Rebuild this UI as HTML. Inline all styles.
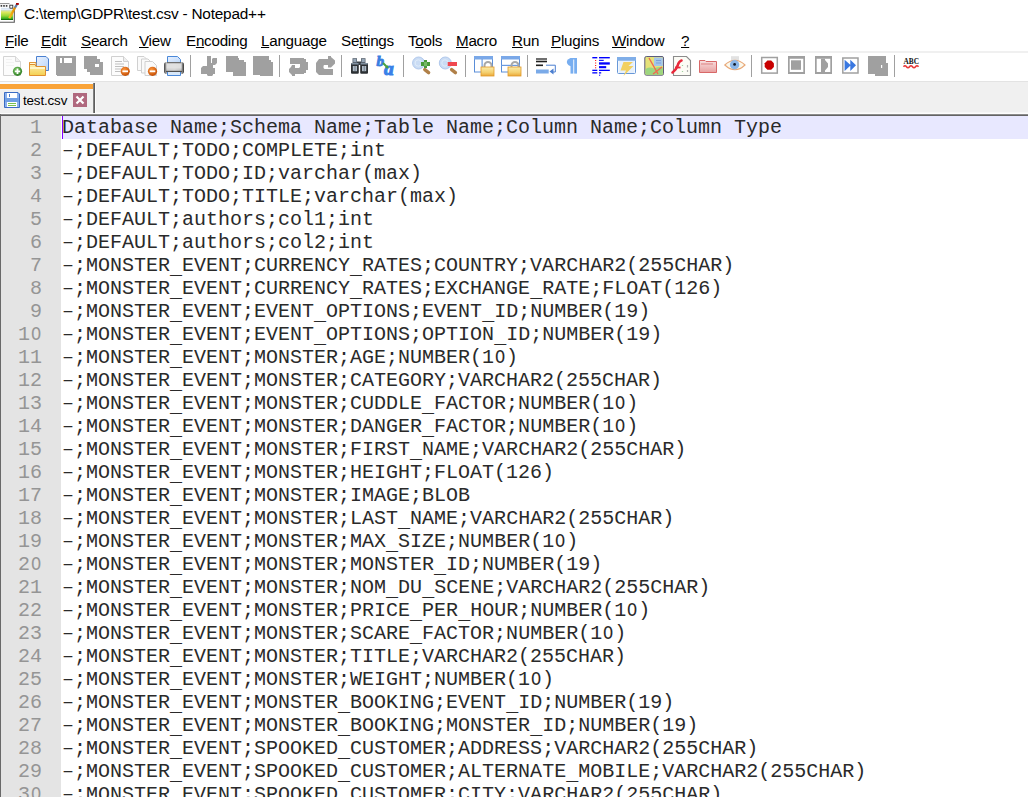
<!DOCTYPE html>
<html><head><meta charset="utf-8">
<style>
*{margin:0;padding:0;box-sizing:border-box}
html,body{width:1028px;height:797px;overflow:hidden;background:#fff}
body{position:relative;font-family:"Liberation Sans",sans-serif}
.abs{position:absolute}
#title{position:absolute;left:24px;top:4.2px;font-size:15.4px;letter-spacing:-0.22px;line-height:20px;color:#000;white-space:pre}
.m{position:absolute;top:31.5px;font-size:15.2px;letter-spacing:-0.25px;line-height:18px;color:#000;white-space:pre}
.m u{text-decoration:underline;text-decoration-thickness:1px;text-underline-offset:0.5px}
#l1{position:absolute;left:0;top:51px;width:1028px;height:2px;background:#f0f0f0}
#tb{position:absolute;left:0;top:53px;width:1028px;height:28px}
#l2{position:absolute;left:0;top:81px;width:1028px;height:1px;background:#e3e3e3}
#tabbar{position:absolute;left:0;top:82px;width:1028px;height:32px;background:#f0f0f0}
#edtop0{position:absolute;left:96px;top:112px;width:932px;height:1px;background:#f7f7f7}
#edtop1{position:absolute;left:0;top:113px;width:1028px;height:1px;background:#fdfdfd}
#edtop2{position:absolute;left:0;top:114px;width:1028px;height:1px;background:#8c8c8c}
#edtop3{position:absolute;left:0;top:115px;width:1028px;height:1px;background:#646464}
#edleft{position:absolute;left:0;top:114px;width:1px;height:683px;background:#696969}
#gutter{position:absolute;left:1px;top:116px;width:60px;height:681px;background:#e4e4e4}
#hl{position:absolute;left:62px;top:116px;width:966px;height:23px;background:#e8e8ff}
#caret{position:absolute;left:62px;top:116px;width:1px;height:23px;background:#8000ff}
#nums{position:absolute;left:0;top:116px;width:42px;text-align:right;font-family:"Liberation Mono",monospace;font-size:20px;line-height:23px;color:#959595;white-space:pre}
#text{position:absolute;left:62px;top:116px;font-family:"Liberation Mono",monospace;font-size:20px;line-height:23px;color:#2a2a2a;white-space:pre}
#text i{font-style:normal;position:relative;top:3px}
#text b,#nums b{font-weight:normal;display:inline-block;width:12px;transform:scaleX(0.85)}
.sep{position:absolute;top:55px;width:1px;height:22px;background:#a0a0a0}
</style></head><body>
<!-- title -->
<div id="title">C:\temp\GDPR\test.csv - Notepad++</div>
<!-- menu -->
<div class="m" style="left:5px"><u>F</u>ile</div>
<div class="m" style="left:41px"><u>E</u>dit</div>
<div class="m" style="left:81px"><u>S</u>earch</div>
<div class="m" style="left:139px"><u>V</u>iew</div>
<div class="m" style="left:186px">E<u>n</u>coding</div>
<div class="m" style="left:261px"><u>L</u>anguage</div>
<div class="m" style="left:341px">Se<u>t</u>tings</div>
<div class="m" style="left:408px">T<u>o</u>ols</div>
<div class="m" style="left:456px"><u>M</u>acro</div>
<div class="m" style="left:512px"><u>R</u>un</div>
<div class="m" style="left:551px"><u>P</u>lugins</div>
<div class="m" style="left:612px"><u>W</u>indow</div>
<div class="m" style="left:681px"><u>?</u></div>
<div id="l1"></div>
<div id="l2"></div>
<div id="tabbar"></div>
<div id="edtop0"></div>
<div id="edtop1"></div>
<div id="edtop2"></div>
<div id="edtop3"></div>
<div id="edleft"></div>
<div id="gutter"></div>
<div id="hl"></div>
<div id="nums">1
2
3
4
5
6
7
8
9
1<b>O</b>
11
12
13
14
15
16
17
18
19
2<b>O</b>
21
22
23
24
25
26
27
28
29
3<b>O</b></div>
<div id="text">Database Name;Schema Name;Table Name;Column Name;Column Type
–;DEFAULT;TODO;COMPLETE;int
–;DEFAULT;TODO;ID;varchar(max)
–;DEFAULT;TODO;TITLE;varchar(max)
–;DEFAULT;authors;col1;int
–;DEFAULT;authors;col2;int
–;MONSTER<i>_</i>EVENT;CURRENCY<i>_</i>RATES;COUNTRY;VARCHAR2(255CHAR)
–;MONSTER<i>_</i>EVENT;CURRENCY<i>_</i>RATES;EXCHANGE<i>_</i>RATE;FLOAT(126)
–;MONSTER<i>_</i>EVENT;EVENT<i>_</i>OPTIONS;EVENT<i>_</i>ID;NUMBER(19)
–;MONSTER<i>_</i>EVENT;EVENT<i>_</i>OPTIONS;OPTION<i>_</i>ID;NUMBER(19)
–;MONSTER<i>_</i>EVENT;MONSTER;AGE;NUMBER(1<b>O</b>)
–;MONSTER<i>_</i>EVENT;MONSTER;CATEGORY;VARCHAR2(255CHAR)
–;MONSTER<i>_</i>EVENT;MONSTER;CUDDLE<i>_</i>FACTOR;NUMBER(1<b>O</b>)
–;MONSTER<i>_</i>EVENT;MONSTER;DANGER<i>_</i>FACTOR;NUMBER(1<b>O</b>)
–;MONSTER<i>_</i>EVENT;MONSTER;FIRST<i>_</i>NAME;VARCHAR2(255CHAR)
–;MONSTER<i>_</i>EVENT;MONSTER;HEIGHT;FLOAT(126)
–;MONSTER<i>_</i>EVENT;MONSTER;IMAGE;BLOB
–;MONSTER<i>_</i>EVENT;MONSTER;LAST<i>_</i>NAME;VARCHAR2(255CHAR)
–;MONSTER<i>_</i>EVENT;MONSTER;MAX<i>_</i>SIZE;NUMBER(1<b>O</b>)
–;MONSTER<i>_</i>EVENT;MONSTER;MONSTER<i>_</i>ID;NUMBER(19)
–;MONSTER<i>_</i>EVENT;MONSTER;NOM<i>_</i>DU<i>_</i>SCENE;VARCHAR2(255CHAR)
–;MONSTER<i>_</i>EVENT;MONSTER;PRICE<i>_</i>PER<i>_</i>HOUR;NUMBER(1<b>O</b>)
–;MONSTER<i>_</i>EVENT;MONSTER;SCARE<i>_</i>FACTOR;NUMBER(1<b>O</b>)
–;MONSTER<i>_</i>EVENT;MONSTER;TITLE;VARCHAR2(255CHAR)
–;MONSTER<i>_</i>EVENT;MONSTER;WEIGHT;NUMBER(1<b>O</b>)
–;MONSTER<i>_</i>EVENT;MONSTER<i>_</i>BOOKING;EVENT<i>_</i>ID;NUMBER(19)
–;MONSTER<i>_</i>EVENT;MONSTER<i>_</i>BOOKING;MONSTER<i>_</i>ID;NUMBER(19)
–;MONSTER<i>_</i>EVENT;SPOOKED<i>_</i>CUSTOMER;ADDRESS;VARCHAR2(255CHAR)
–;MONSTER<i>_</i>EVENT;SPOOKED<i>_</i>CUSTOMER;ALTERNATE<i>_</i>MOBILE;VARCHAR2(255CHAR)
–;MONSTER<i>_</i>EVENT;SPOOKED<i>_</i>CUSTOMER;CITY;VARCHAR2(255CHAR)</div>
<div id="caret"></div>
<svg class="abs" style="left:0;top:0" width="1028" height="116" viewBox="0 0 1028 116">
<defs>
<linearGradient id="gNpp" x1="0" y1="0" x2="0" y2="1"><stop offset="0" stop-color="#c8daf0"/><stop offset="0.25" stop-color="#e0e860"/><stop offset="0.6" stop-color="#98d838"/><stop offset="0.85" stop-color="#40b020"/><stop offset="1" stop-color="#005800"/></linearGradient>
<linearGradient id="gPen" x1="0" y1="0" x2="1" y2="0"><stop offset="0" stop-color="#f8c020"/><stop offset="1" stop-color="#e08800"/></linearGradient>
<radialGradient id="gGreen" cx="0.4" cy="0.35" r="0.7"><stop offset="0" stop-color="#80c868"/><stop offset="1" stop-color="#2a7a20"/></radialGradient>
<radialGradient id="gOr" cx="0.4" cy="0.35" r="0.7"><stop offset="0" stop-color="#ff9a40"/><stop offset="1" stop-color="#c04800"/></radialGradient>
<linearGradient id="gFold" x1="0" y1="0" x2="0" y2="1"><stop offset="0" stop-color="#fff4c0"/><stop offset="1" stop-color="#f4d050"/></linearGradient>
<linearGradient id="gPg" x1="0" y1="0" x2="1" y2="1"><stop offset="0" stop-color="#eaf2ff"/><stop offset="1" stop-color="#b8d4f8"/></linearGradient>
<linearGradient id="gPrn" x1="0" y1="0" x2="0" y2="1"><stop offset="0" stop-color="#e8e8e8"/><stop offset="0.5" stop-color="#c0c0c0"/><stop offset="1" stop-color="#505050"/></linearGradient>
<linearGradient id="gLock" x1="0" y1="0" x2="0" y2="1"><stop offset="0" stop-color="#fcecaa"/><stop offset="0.6" stop-color="#f4d070"/><stop offset="1" stop-color="#eaa838"/></linearGradient>
<linearGradient id="gRedF" x1="0" y1="0" x2="0" y2="1"><stop offset="0" stop-color="#f8e0e0"/><stop offset="1" stop-color="#e8a0a0"/></linearGradient>
<linearGradient id="gPrnH" x1="0" y1="0" x2="1" y2="0"><stop offset="0" stop-color="#404040"/><stop offset="0.15" stop-color="#d0d0d0"/><stop offset="0.5" stop-color="#d8d8d8"/><stop offset="0.85" stop-color="#c8c8c8"/><stop offset="1" stop-color="#303030"/></linearGradient>
</defs>
<!-- notepad++ app icon -->
<g>
 <rect x="0" y="3.5" width="14" height="19" fill="#fff"/>
 <path d="M0 22.3 H14.3 V8" fill="none" stroke="#5a5a5a" stroke-width="1.1"/>
 <path d="M0 3.6 H9.5" stroke="#808080" stroke-width="0.9"/>
 <path d="M0.6 5.8 h1.6 M3.2 5.8 h1.6 M5.8 5.8 h1.6" stroke="#404040" stroke-width="1.8"/>
 <rect x="9.8" y="5.2" width="3" height="3" fill="#fff" stroke="#303030" stroke-width="0.9"/>
 <rect x="1" y="7.8" width="8.5" height="1" fill="#d0e0f0"/>
 <rect x="1" y="9.5" width="12" height="10.5" fill="url(#gNpp)"/>
 <path d="M9.3 18.2 L15.2 7.2" stroke="url(#gPen)" stroke-width="2.4" stroke-linecap="butt"/>
 <path d="M15 7.6 L16.8 4.6" stroke="#6080a8" stroke-width="2.2"/>
 <rect x="16" y="3" width="2.8" height="1.9" fill="#a00000"/>
</g>
<!-- NEW -->
<g>
 <path d="M3.5 56.5 H15.5 L20.5 61.5 V75.5 H3.5 Z" fill="#fcfcfc" stroke="#d4d4d4" stroke-width="1"/>
 <path d="M15.5 56.5 V61.5 H20.5" fill="#f0f0f0" stroke="#d8d8d8" stroke-width="1"/>
 <path d="M6 59.5h6M6 62.5h8M6 65.5h8" stroke="#f2f2f2" stroke-width="1"/>
 <circle cx="17.5" cy="71.3" r="4.6" fill="url(#gGreen)"/>
 <path d="M17.5 68.6v5.4M14.8 71.3h5.4" stroke="#fff" stroke-width="1.8"/>
</g>
<!-- OPEN -->
<g>
 <path d="M36.5 56.5 H46 L48.5 59 V70.5 H36.5 Z" fill="url(#gPg)" stroke="#4a80d0" stroke-width="1"/>
 <path d="M29.5 62.5 H36 V66.5 H29.5 Z" fill="#fff8d8" stroke="#e09838" stroke-width="1"/>
 <path d="M29.5 62.5 V75.5 H45.5 V66.5 H36 L35 64.5 H29.5" fill="url(#gFold)" stroke="#e09030" stroke-width="1"/>
 <rect x="30" y="67" width="15" height="2" fill="#fff6c8"/>
</g>
<!-- SAVE (disabled) -->
<g fill="#a0a0a0">
 <path d="M56 56 H76 V76 H57 V75 H56 Z"/>
 <rect x="60" y="58" width="2" height="5" fill="#fff"/>
 <rect x="64" y="58" width="8" height="5" fill="#fff"/>
</g>
<!-- SAVE ALL -->
<g fill="#a0a0a0">
 <path d="M84 56 H97 V59 H100 V62 H103 V75 H90 V72 H87 V69 H84 Z"/>
 <rect x="95" y="64" width="4" height="3" fill="#fff"/>
</g>
<!-- CLOSE -->
<g>
 <path d="M111.5 56.5 H123.5 L128.5 61.5 V75.5 H111.5 Z" fill="#fcfcfc" stroke="#d0d0d0" stroke-width="1"/>
 <path d="M123.5 56.5 V61.5 H128.5" fill="#eee" stroke="#d0d0d0" stroke-width="1"/>
 <path d="M115 61.5h7M115 64h9M115 66.5h9M115 69h6M115 71.5h5" stroke="#c0c0c0" stroke-width="1"/>
 <circle cx="125.2" cy="71.3" r="4.6" fill="url(#gOr)"/>
 <rect x="122.4" y="70.4" width="5.6" height="1.8" fill="#fff"/>
</g>
<!-- CLOSE ALL -->
<g fill="#fafafa" stroke="#d0d0d0" stroke-width="1">
 <path d="M137.5 56.5 H144 L146.5 59 V70.5 H137.5 Z"/>
 <path d="M141.5 59 H148 L150.5 61.5 V73 H141.5 Z"/>
 <path d="M145 61.5 H152.5 L156.5 65.5 V75.5 H145 Z"/>
</g>
<circle cx="152.5" cy="71.3" r="4.6" fill="url(#gOr)"/>
<rect x="149.7" y="70.4" width="5.6" height="1.8" fill="#fff"/>
<!-- PRINT -->
<g>
 <path d="M167.5 56.5 H177.5 L180.5 59.5 V64 H167.5 Z" fill="url(#gPg)" stroke="#4a88d8" stroke-width="1"/>
 <rect x="164" y="62" width="20" height="12" rx="2.8" fill="url(#gPrnH)"/>
 <rect x="166.5" y="63.5" width="15" height="5" fill="#e4e4e4" opacity="0.8"/>
 <rect x="167" y="62" width="14" height="1.2" fill="#707070"/>
 <rect x="166" y="70.8" width="16" height="1.4" fill="#505050"/>
 <path d="M167.5 72 V75.5 H180.5 V72" fill="#d8e8fa" stroke="#4a88d8" stroke-width="1"/>
</g>
<rect x="190" y="55" width="1" height="22" fill="#a0a0a0"/>
<!-- CUT -->
<path fill="#a0a0a0" d="M207 56 H211 V63 H212 V59 L213 58 H217 V63 L215 65 H213 V68 H215 V74 H213 V75 L212 76 H208 L207 75 V74 H201 V68 L203 66 H207 Z"/>
<!-- COPY -->
<path fill="#a0a0a0" d="M226 56 H238 V58 H239 V60 H244 V62 H246 V76 H233 V72 H226 Z"/>
<!-- PASTE -->
<path fill="#a0a0a0" d="M253 56 H269 V60 H271 V62 H273 V76 H260 V75 H253 Z"/>
<rect x="279" y="55" width="1" height="22" fill="#a0a0a0"/>
<!-- UNDO -->
<path fill="#a0a0a0" d="M290 58 H304 V59 H306 V62 H308 V70 H306 V73 H304 V74 H295 V76 H292 V75 L289 72 V69 L291 67 L292 65 H295 V68 H299 L300 67 V64 H290 Z"/>
<!-- REDO -->
<path fill="#a0a0a0" d="M328 56 H331 V57 L335 60.5 V63.5 L331 67.5 H328 V65 H324 L323.5 66 V68 L324.5 69 H333 V75 H319 L316 72 V63 L319 59 H328 Z"/>
<rect x="341" y="55" width="1" height="22" fill="#a0a0a0"/>
<!-- FIND binoculars -->
<g>
 <rect x="352.5" y="58.2" width="4.5" height="6" fill="#5a6470"/>
 <rect x="361" y="58.2" width="4.5" height="6" fill="#5a6470"/>
 <rect x="351" y="63" width="7.8" height="10.8" rx="1" fill="#2c3034"/>
 <rect x="360.2" y="63" width="7.8" height="10.8" rx="1" fill="#2c3034"/>
 <rect x="357" y="61.5" width="4" height="3.5" fill="#3a4046"/>
 <rect x="352.8" y="66" width="4.2" height="5.2" fill="#b0bcc8"/>
 <rect x="362" y="66" width="4.2" height="5.2" fill="#b0bcc8"/>
 <rect x="354.5" y="66" width="1" height="5.2" fill="#707c88"/>
 <rect x="363.7" y="66" width="1" height="5.2" fill="#707c88"/>
 <rect x="353.3" y="59" width="3" height="3" fill="#98a8b8"/>
 <rect x="361.8" y="59" width="3" height="3" fill="#98a8b8"/>
 <rect x="351.5" y="63" width="7" height="1.5" fill="#8090a0"/>
 <rect x="360.7" y="63" width="7" height="1.5" fill="#8090a0"/>
</g>
<!-- REPLACE -->
<g>
 <text x="376.5" y="66" font-family="Liberation Serif" font-style="italic" font-weight="bold" font-size="15" fill="#3a7ee0" stroke="#3a7ee0" stroke-width="0.9">b</text>
 <text x="384" y="75.2" font-family="Liberation Serif" font-style="italic" font-weight="bold" font-size="19.5" fill="#3a80e8" stroke="#3a80e8" stroke-width="1">a</text>
 <path d="M383 63 L387 67" stroke="#48a040" stroke-width="2"/>
 <path d="M385 68 L388.5 68.5 L388 65 Z" fill="#48a040"/>
</g>
<rect x="403" y="55" width="1" height="22" fill="#a0a0a0"/>
<!-- ZOOM IN -->
<g>
 <path d="M424.8 69.6 L428.6 72.6" stroke="#b08048" stroke-width="3.4" stroke-linecap="round"/>
 <circle cx="418.6" cy="63" r="6" fill="#cadcf4" stroke="#b0c8ec" stroke-width="1"/>
 <circle cx="418.3" cy="63" r="3.2" fill="none" stroke="#e0ecfa" stroke-width="1"/>
 <path d="M421 62 H424 V60 H427 V62 H430 V66 H427 V68 H424 V66 H421 Z" fill="#4a9a3a"/>
 <rect x="424" y="62" width="3" height="4" fill="#78b868"/>
</g>
<!-- ZOOM OUT -->
<g>
 <path d="M451.6 69.6 L455.4 72.6" stroke="#b08048" stroke-width="3.4" stroke-linecap="round"/>
 <circle cx="445.3" cy="63" r="6" fill="#cadcf4" stroke="#b0c8ec" stroke-width="1"/>
 <circle cx="445" cy="63" r="3.2" fill="none" stroke="#e0ecfa" stroke-width="1"/>
 <rect x="447.7" y="62" width="9.3" height="4" fill="#f04850"/>
</g>
<rect x="465" y="55" width="1" height="22" fill="#a0a0a0"/>
<!-- SYNC V -->
<g>
 <rect x="474.5" y="56.5" width="18" height="15.5" fill="#fff" stroke="#5a8ed8" stroke-width="1"/>
 <rect x="474" y="56" width="19" height="3.5" fill="#7aa8e8"/>
 <rect x="481.5" y="59" width="1.2" height="13" fill="#6a9ae0"/>
 <path d="M484.5 67.5 V65.5 A3.5 3.5 0 0 1 491.5 65.5 V67.5" fill="none" stroke="#a8a8a8" stroke-width="2"/>
 <rect x="481" y="67" width="13" height="9" fill="url(#gLock)" stroke="#e09828" stroke-width="0.8"/>
</g>
<!-- SYNC H -->
<g>
 <rect x="501.5" y="56.5" width="18" height="15.5" fill="#fff" stroke="#5a8ed8" stroke-width="1"/>
 <rect x="501" y="56" width="19" height="3.5" fill="#7aa8e8"/>
 <rect x="501" y="64.8" width="19" height="1.2" fill="#6a9ae0"/>
 <path d="M511.5 67.5 V65.5 A3.5 3.5 0 0 1 518.5 65.5 V67.5" fill="none" stroke="#a8a8a8" stroke-width="2"/>
 <rect x="508" y="67" width="13" height="9" fill="url(#gLock)" stroke="#e09828" stroke-width="0.8"/>
</g>
<rect x="527" y="55" width="1" height="22" fill="#a0a0a0"/>
<!-- WRAP -->
<g>
 <rect x="536" y="58" width="11" height="2" fill="#707070"/>
 <rect x="536" y="60.7" width="11" height="1.6" fill="#202020"/>
 <rect x="536" y="64.5" width="7" height="1.6" fill="#202020"/>
 <path d="M546 65.2 H555.3 V72 H552" fill="none" stroke="#4a7ed0" stroke-width="1"/>
 <path d="M549.5 71.5 L553.5 68.5 V74.5 Z" fill="#4a7ed0"/>
 <rect x="536" y="69.5" width="12.7" height="4" fill="#7aaae8"/>
</g>
<!-- PILCROW -->
<g fill="#78aef0">
 <path d="M572 58 A5.2 4.1 0 0 0 572 66.2 Z"/>
 <rect x="570.5" y="58" width="2.8" height="15.6"/>
 <rect x="574.2" y="58" width="2.8" height="15.6"/>
 <rect x="570.5" y="58" width="6.5" height="1.5"/>
</g>
<!-- INDENT GUIDE -->
<g fill="#0000ff">
 <rect x="592.3" y="57" width="5" height="1.4"/><rect x="599" y="57" width="10.8" height="1.4"/>
 <rect x="599" y="59.8" width="4.7" height="1.1"/>
 <rect x="599" y="62.3" width="10.8" height="2.3"/>
 <rect x="599" y="66.1" width="7.2" height="2.1"/>
 <rect x="592.3" y="69.7" width="5" height="1.3"/><rect x="599" y="69.7" width="10.8" height="1.3"/>
 <rect x="592.3" y="72.2" width="5" height="1.3"/><rect x="599" y="72.2" width="2.2" height="1.3"/>
 <rect x="599" y="74.7" width="1.2" height="1"/>
</g>
<g fill="#ff2020"><rect x="595" y="60" width="1.2" height="1"/><rect x="595" y="62.5" width="1.2" height="1"/><rect x="595" y="65" width="1.2" height="1"/><rect x="595" y="67.3" width="1.2" height="1"/></g>
<!-- FUNC WINDOW lightning -->
<g>
 <rect x="617.5" y="57.5" width="18" height="16" rx="1" fill="#fff" stroke="#6898d8" stroke-width="1"/>
 <rect x="617" y="57" width="19" height="3.8" fill="#80aee8"/>
 <rect x="618.5" y="61" width="16" height="12" fill="#e6f0fc"/>
 <path d="M623.5 62 H633 L628.5 66 H633.5 L623.5 76 L626 70.5 H620.5 Z" fill="#f2d060"/>
</g>
<!-- DOC MAP -->
<g>
 <rect x="644.8" y="56.5" width="18.7" height="18.7" rx="1.5" fill="#e6e27a" stroke="#5c5c7c" stroke-width="1"/>
 <rect x="654" y="57.5" width="8.8" height="8.5" fill="#a4c6ea"/>
 <path d="M645.5 69 Q650 66.5 654 68.5 Q658 66 662.8 67.5 V74.7 H645.5 Z" fill="#9cd680"/>
 <path d="M649 58 L658 74 M662 67 L653 74" stroke="#f06a50" stroke-width="1.4"/>
 <path d="M656 60.5 h5 M656 63 h5" stroke="#7aa0d8" stroke-width="1"/>
</g>
<!-- FUNCTION LIST (f doc) -->
<g>
 <path d="M673.5 56.5 H686.5 L690.5 60.5 V75.5 H673.5 Z" fill="#fcfcf6" stroke="#8c8c8c" stroke-width="1.1"/>
 <path d="M672.5 72.5 Q676 70 677.5 66 Q679 61 681.5 60.5" fill="none" stroke="#e8283a" stroke-width="2.6" stroke-linecap="round"/>
 <path d="M675 67.5 H680.5" stroke="#e8283a" stroke-width="1.8"/>
 <path d="M687.5 65 v2.5 M687.5 70 v2" stroke="#b0b0b0" stroke-width="1.2"/>
 <path d="M682.5 65 v1 M682.5 71 v1" stroke="#a0d0a0" stroke-width="1.2"/>
</g>
<!-- FOLDER red -->
<g>
 <path d="M699.5 60.5 H705 L706 61.5 H716.5 V72.5 H699.5 Z" fill="url(#gRedF)" stroke="#d86868" stroke-width="1"/>
 <rect x="701" y="63" width="12" height="2" fill="#e8a8a8"/>
</g>
<!-- EYE -->
<g>
 <rect x="731" y="56.2" width="8" height="4.8" fill="#e2e2e2"/>
 <path d="M724.8 65 Q735 55.5 745 65 Q735 74.5 724.8 65 Z" fill="#fbf8ec" stroke="#e8a878" stroke-width="1.1"/>
 <circle cx="734.6" cy="64.8" r="4.7" fill="#8cb6e8"/>
 <circle cx="734.6" cy="64.4" r="1.4" fill="#101828"/>
</g>
<rect x="751" y="55" width="1" height="22" fill="#a0a0a0"/>
<!-- RECORD -->
<g>
 <rect x="761.7" y="57.5" width="15.6" height="15.6" fill="#fff" stroke="#a0a0a0" stroke-width="1.5"/>
 <path d="M767.4 60.6 H771.2 L773.9 63.3 V67.1 L771.2 69.8 H767.4 L764.7 67.1 V63.3 Z" fill="#c80000"/>
</g>
<!-- STOP -->
<g>
 <path d="M788 56 H805 V74 H788 Z M789.7 58.8 V72 H803.3 V58.8 Z" fill="#a0a0a0" fill-rule="evenodd"/>
 <rect x="791" y="60.3" width="10" height="9.5" fill="#a0a0a0"/>
</g>
<!-- PLAY -->
<g>
 <path d="M815 56 H832 V74 H815 Z M816.7 58.8 V72 H830.3 V58.8 Z" fill="#a0a0a0" fill-rule="evenodd"/>
 <path d="M821 58.8 H825 V60 L828 63.5 V67 L825 70.5 V72 H821 Z" fill="#a0a0a0"/>
</g>
<!-- PLAY MULTI -->
<g>
 <rect x="842.8" y="58" width="15.2" height="15" fill="#fff" stroke="#a0a0a0" stroke-width="1.5"/>
 <path d="M844.6 59.7 L850.8 65.3 L844.6 70.9 Z M850.3 59.7 L856 65.3 L850.3 70.9 Z" fill="#3a78e0"/>
</g>
<!-- SAVE MACRO -->
<g fill="#a0a0a0">
 <path d="M868 56 H886 V63 H888 V76 H875 V74 H868 Z"/>
 <rect x="881" y="65" width="1.2" height="3" fill="#fff"/>
</g>
<rect x="894" y="55" width="1" height="22" fill="#a0a0a0"/>
<!-- ABC -->
<g>
 <text x="903.5" y="63.8" font-family="Liberation Serif" font-weight="bold" font-size="7.8" fill="#101010" textLength="15.5" lengthAdjust="spacingAndGlyphs">ABC</text>
 <path d="M903.5 66.8 Q905 64.8 906.5 66.8 T909.5 66.8 T912.5 66.8 T915.5 66.8 T918.5 66.8" fill="none" stroke="#e83838" stroke-width="1.6"/>
</g>
<!-- TAB -->
<rect x="0" y="82" width="93" height="2" fill="#f8fbff"/>
<rect x="0" y="84" width="93" height="5" fill="#f9a43a"/>
<rect x="0" y="89" width="93" height="1" fill="#eef4fb"/>
<rect x="93" y="83" width="1" height="30" fill="#808080"/>
<rect x="94" y="83" width="1" height="30" fill="#5e5e5e"/>
<rect x="95" y="84" width="1" height="29" fill="#fbfbfb"/>
<!-- floppy -->
<g>
 <path d="M4.5 92.5 H18 L19.5 94 V107.5 H4.5 Z" fill="#8ab0ec" stroke="#3a6cc4" stroke-width="1"/>
 <rect x="7" y="93" width="10" height="5" fill="#fff"/>
 <rect x="9" y="94" width="1" height="3" fill="#4a7cd0"/>
 <rect x="5.2" y="98" width="13.6" height="4" fill="#6e9ee4"/>
 <rect x="7" y="102" width="10" height="5" fill="#fff"/>
 <rect x="8" y="103" width="8" height="1" fill="#78c050"/>
 <rect x="8" y="105" width="8" height="1" fill="#78c050"/>
</g>
<!-- close btn -->
<rect x="73" y="93" width="14" height="14" fill="#b0687e"/>
<path d="M76.5 96.5 L83.5 103.5 M83.5 96.5 L76.5 103.5" stroke="#fff" stroke-width="2.2"/>
</svg>
<div class="abs" style="left:23px;top:92.5px;font-size:13.4px;letter-spacing:-0.15px;line-height:16px;color:#000;white-space:pre">test.csv</div>
</body></html>
